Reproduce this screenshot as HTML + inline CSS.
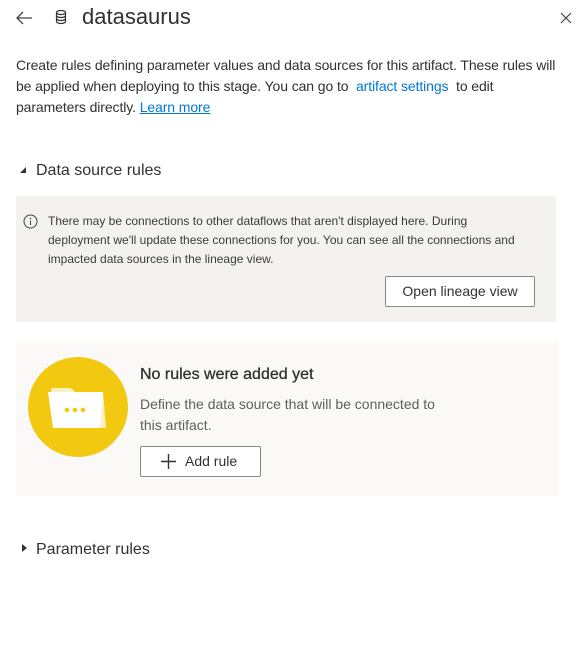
<!DOCTYPE html>
<html><head><style>
*{margin:0;padding:0;box-sizing:border-box}
body{width:582px;height:663px;background:#fff;font-family:"Liberation Sans",sans-serif;color:#323130;position:relative;overflow:hidden}
.a{position:absolute;white-space:nowrap}
</style></head><body>
<svg class="a" style="left:14px;top:9px" width="20" height="18" viewBox="0 0 20 18"><path d="M18 9H3M9 3L3 9l6 6" stroke="#444" stroke-width="1.3" fill="none"/></svg>
<svg class="a" style="left:55px;top:9px" width="12" height="16" viewBox="0 0 12 16"><ellipse cx="6" cy="3.5" rx="4.5" ry="2" stroke="#333" fill="none" stroke-width="1.2"/><path d="M1.5 3.5v9c0 1.1 2 2 4.5 2s4.5-.9 4.5-2v-9M1.5 6.5c0 1.1 2 2 4.5 2s4.5-.9 4.5-2M1.5 9.5c0 1.1 2 2 4.5 2s4.5-.9 4.5-2" stroke="#333" fill="none" stroke-width="1.2"/></svg>
<div class="a" style="left:82px;top:4px;font-size:22px;color:#323130">datasaurus</div>
<svg class="a" style="left:560px;top:12px" width="12" height="12" viewBox="0 0 12 12"><path d="M1 1l10 10M11 1L1 11" stroke="#444" stroke-width="1.2"/></svg>
<div class="a" style="left:16px;top:55px;font-size:14px;line-height:21px;white-space:normal;width:550px;letter-spacing:-0.1px">Create rules defining parameter values and data sources for this artifact. These rules will be applied when deploying to this stage. You can go to &nbsp;<span style="color:#0078d4">artifact settings</span> &nbsp;to edit parameters directly. <span style="color:#0078d4;text-decoration:underline">Learn more</span></div>
<svg class="a" style="left:19px;top:166px" width="8" height="8"><path d="M7 1V7H1Z" fill="#333"/></svg>
<div class="a" style="left:36px;top:162px;font-size:16px">Data source rules</div>
<div class="a" style="left:16px;top:196px;width:540px;height:126px;background:#f3f2f1"></div>
<svg class="a" style="left:23px;top:214px" width="15" height="15" viewBox="0 0 15 15"><circle cx="7.5" cy="7.5" r="6.5" stroke="#444" fill="none"/><path d="M7.5 6.5v4.5" stroke="#444"/><circle cx="7.5" cy="4.5" r=".8" fill="#444"/></svg>
<div class="a" style="left:48px;top:212px;font-size:12px;line-height:19px;color:#3b3a39">There may be connections to other dataflows that aren't displayed here. During<br>deployment we'll update these connections for you. You can see all the connections and<br>impacted data sources in the lineage view.</div>
<div class="a" style="left:385px;top:276px;width:150px;height:31px;background:#fff;border:1px solid #8a8886;border-radius:2px;font-size:14px;line-height:29px;text-align:center">Open lineage view</div>
<div class="a" style="left:16px;top:341px;width:542px;height:155px;background:#faf9f8;border-radius:2px"></div>
<div class="a" style="left:28px;top:357px;width:100px;height:100px;border-radius:50%;background:#f2c811"></div>
<svg class="a" style="left:46px;top:382px" width="64" height="50" viewBox="0 0 64 50"><path d="M5 6h20l4 4h28l3 36H8Z" fill="#fbf1c4"/><path d="M2 10h55l-3 36H7Z" fill="#fff"/><circle cx="21" cy="28" r="2.3" fill="#f2c811"/><circle cx="29" cy="28" r="2.3" fill="#f2c811"/><circle cx="37" cy="28" r="2.3" fill="#f2c811"/></svg>
<div class="a" style="left:140px;top:366px;font-size:16px;color:#323130;-webkit-text-stroke:0.3px #323130">No rules were added yet</div>
<div class="a" style="left:140px;top:394px;font-size:14px;line-height:21px;color:#605e5c">Define the data source that will be connected to<br>this artifact.</div>
<div class="a" style="left:140px;top:446px;width:121px;height:31px;background:#fff;border:1px solid #8a8886;border-radius:2px;font-size:14px;line-height:29px"><svg style="position:absolute;left:20px;top:7px" width="15" height="15"><path d="M7.5 0v15M0 7.5h15" stroke="#333" stroke-width="1.4"/></svg><span style="position:absolute;left:44px">Add rule</span></div>
<svg class="a" style="left:21px;top:543px" width="8" height="10"><path d="M1 1l5 4-5 4Z" fill="#333"/></svg>
<div class="a" style="left:36px;top:541px;font-size:16px">Parameter rules</div>
</body></html>
